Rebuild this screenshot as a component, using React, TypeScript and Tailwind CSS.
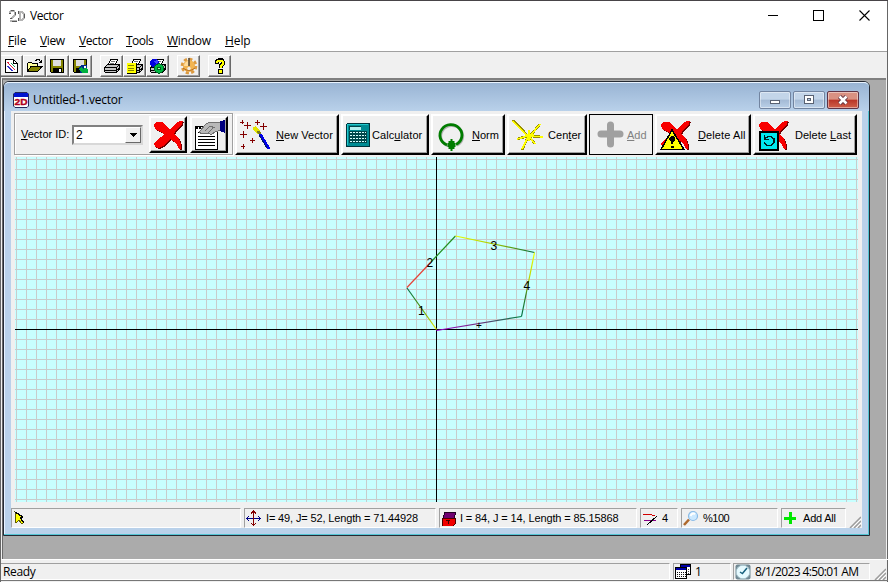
import React from "react";

const ui = "font-['Open_Sans','Noto_Sans',sans-serif] text-[12px] leading-[16px] whitespace-nowrap";
const sans = "font-['Liberation_Sans',Arial,sans-serif] text-[11px] leading-[14px] whitespace-nowrap";

type IconProps = { w: number; h: number; className?: string; smooth?: boolean; children: React.ReactNode };
function Icon({ w, h, className = "", smooth, children }: IconProps) {
  return (
    <svg width={w} height={h} viewBox={`0 0 ${w} ${h}`} className={"block shrink-0 " + className} shapeRendering={smooth ? "auto" : "crispEdges"} fill="none">
      {children}
    </svg>
  );
}

function ToolButton({ children, className = "" }: { children: React.ReactNode; className?: string }) {
  return (
    <button className={"flex h-[22px] w-[23px] shrink-0 items-center justify-center border border-t-white border-l-white border-r-[#696969] border-b-[#696969] bg-[#f0f0f0] shadow-[inset_-1px_-1px_0_#a0a0a0] " + className}>
      {children}
    </button>
  );
}

function Page() {
  return (
    <Icon w={17} h={16}>
      <path d="M2.5 1.500H10.500L14.500 5.500V14.500H2.500Z" fill="#fff" stroke="#000" />
      <path d="M10.500 1.500V5.500H14" stroke="#000" />
      <path d="M4.500 4L6 5.500M6 6L12.500 12.500" stroke="#e02040" />
      <path d="M4.500 8L9.500 13" stroke="#3030d0" />
      <path d="M8 5L12.500 9.500" stroke="#20a060" />
    </Icon>
  );
}
function Folder() {
  return (
    <Icon w={17} h={16}>
      <path d="M1.500 13.500V5.500L2.500 4.500H5.500L6.500 5.500H11.500V8" fill="#ffff9c" stroke="#000" />
      <path d="M1.500 13.500L5 8.500H16L11.500 13.500Z" fill="#848400" stroke="#000" />
      <path d="M9.500 3L11 1.500H13L15 4M15.500 1.500V4.500H12.500" stroke="#000" />
    </Icon>
  );
}
function Floppy({ globe }: { globe?: boolean }) {
  return (
    <Icon w={17} h={16}>
      <path d="M1.500 1.500H14.500V14.500H2.500L1.500 13.500Z" fill="#848400" stroke="#000" />
      <path d="M4 2H12V8H4Z" fill="#dedede" />
      <path d="M4 10H13V15H4Z" fill="#000" />
      <path d="M10 11H12V14H10Z" fill="#fff" />
      {globe && (
        <>
          <path d="M7 9L9 7H15V15H8Z" fill="#002c8c" />
          <path d="M7 11L9 9L11 11L14 9L16 12V15H10L8 13Z" fill="#00b040" />
          <path d="M12 8H14V10H12Z" fill="#fff" />
        </>
      )}
    </Icon>
  );
}
function Printer({ note, globe }: { note?: boolean; globe?: boolean }) {
  return (
    <Icon w={18} h={16}>
      <path d="M5.500 6.500L7.500 1.500H14.500L12.500 6.500Z" fill="#fff" stroke="#000" />
      <path d="M8 3.500H12M7 5.500H11" stroke="#777" />
      <path d="M1.500 9.500L4.500 6.500H16.500V11L13.500 14.500H2.500L1.500 13.500Z" fill="#c6c6c6" stroke="#000" />
      <path d="M2 9.500H13.500L16 7M2 12.500H13.500L16.500 9.500M13.500 10V14" stroke="#000" />
      {note && (
        <>
          <path d="M1 5H10V15H1Z" fill="#ffff00" />
          <path d="M2 7.500H8M2 10.500H8M2 12.500H8" stroke="#848400" />
          <path d="M1 15.500H10.500V5" stroke="#000" />
        </>
      )}
      {globe && (
        <>
          <circle cx="5.500" cy="5" r="4.500" fill="#0000e0" />
          <path d="M5 3L9 2V5L7 6Z" fill="#4040ff" />
          <circle cx="10" cy="10.500" r="4.700" fill="#00b840" stroke="#006020" />
          <circle cx="10" cy="10.500" r="1.500" fill="#b0ffb0" stroke="#006020" />
        </>
      )}
    </Icon>
  );
}
function Gear() {
  return (
    <Icon w={18} h={18} smooth>
      <circle cx="9" cy="9" r="6" fill="#f2b552" />
      <circle cx="9" cy="9" r="7" stroke="#dc9a40" strokeWidth="2.600" strokeDasharray="3.200 2.300" />
      <path d="M4 9A5 5 0 0 1 9 4V9Z" fill="#ffdc9c" />
      <path d="M3 11Q9 16 15 11" stroke="#b46b1e" />
      <circle cx="9" cy="11.500" r="1.700" fill="#f0ece4" />
      <path d="M9 1V9" stroke="#4c4030" strokeWidth="1.500" />
    </Icon>
  );
}
function Help() {
  return (
    <Icon w={16} h={16}>
      <path d="M5 6V3.500L7 2H10L11 4V6L8.500 8V10" stroke="#000" strokeWidth="4" />
      <path d="M5 5V3.500L7 2.500H9L11 4V6L8.500 8V10" stroke="#ffff00" strokeWidth="2" />
      <path d="M6 11H11V16H6Z" fill="#000" />
      <path d="M7 12H10V15H7Z" fill="#ffff00" />
    </Icon>
  );
}

function RedX() {
  return (
    <>
      <path d="M2 5L4 3H10L14 7L18 11Q22 5 28 2H31L30 5L25 10L22 15L27 20L29 25V30H27L24 24L18 20L13 26L7 29L3 28L2 24L6 20L12 16L9 13L3 10Z" fill="#700000" />
      <path d="M1 4L3 2H9L13 6L17 10Q21 4 27 1H30L29 4L24 9L21 14L26 19L28 24V29H26L23 23L17 19L12 25L6 28L2 27L1 23L5 19L11 15L8 12L2 9Z" fill="#f80000" />
    </>
  );
}

function BigButton({ width, icon, children, className = "" }: { width: string; icon: React.ReactNode; children?: React.ReactNode; className?: string }) {
  return (
    <button className={`flex h-[41px] shrink-0 items-center border-2 border-t-white border-l-white border-r-black border-b-black bg-[#f0f0f0] shadow-[inset_-1px_-1px_0_#a0a0a0] ${sans} ${width} ${className}`}>
      {icon}
      {children}
    </button>
  );
}

function Panel({ width, children, className = "" }: { width: string; children?: React.ReactNode; className?: string }) {
  return (
    <div className={`flex h-[20px] shrink-0 items-center border border-t-[#a0a0a0] border-l-[#a0a0a0] border-r-white border-b-white ${width} ${className}`}>
      {children}
    </div>
  );
}

function Grip() {
  return (
    <Icon w={12} h={12} smooth>
      <path d="M1 12L12 1M5 12L12 5M9 12L12 9" stroke="#9c9c9c" strokeWidth="1.500" />
      <path d="M3 12L12 3M7 12L12 7" stroke="#fff" />
    </Icon>
  );
}

function Wand() {
  return (
    <Icon w={32} h={32}>
      <path d="M1 3.500H5M3.500 1V5M5 6.500H12M8.500 3V10M16 3.500H21M18.500 1V6M21 7.500H28M24.500 4V11M1 15.500H8M4.500 12V19M11 21.500H16M13.500 19V24M2 27.500H6M4.500 25V30" stroke="#840000" />
      <path d="M15 8L20 14" stroke="#e4e400" strokeWidth="4" />
      <path d="M19 12L23 18" stroke="#777b20" strokeWidth="3" />
      <path d="M21 15L30 30" stroke="#0000e8" strokeWidth="3" />
      <path d="M20 16L28 29" stroke="#001870" />
    </Icon>
  );
}
function CalculatorIcon() {
  return (
    <Icon w={24} h={24}>
      <path d="M1.500 .500H23.500V23.500H.500V1.500Z" fill="#008c94" stroke="#00343c" />
      <path d="M1.500 22V1.500H22" stroke="#20c8cc" />
      <path d="M4 4H15V7H4Z" fill="#b0f0f0" />
      <path d="M3.500 7V3.500H15" stroke="#00484c" />
      <path d="M3 8H21V20H3Z" fill="#00484c" />
      {[9, 12, 15, 18].map((y) => (
        <path key={y} d={`M4 ${y + 0.5}H20`} stroke="#d8ffff" strokeDasharray="2 1" />
      ))}
    </Icon>
  );
}
function NormIcon() {
  return (
    <Icon w={30} h={34} smooth>
      <path d="M11 28A11 10.500 0 1 1 20 27.500" stroke="#b4b4b4" strokeWidth="2.500" />
      <path d="M10 27A11 10.500 0 1 1 19 26.500" stroke="#007c00" strokeWidth="2.800" />
      <path d="M14.500 21V33M12.500 23V31M16.500 23V31M10.500 26H18.500M10.500 28H18.500" stroke="#007c00" strokeWidth="2" />
    </Icon>
  );
}
function Star() {
  return (
    <Icon w={32} h={32}>
      {["M1 1L16 17", "M18 17L28 5", "M17 17L31 18", "M16 17L5 20", "M16 18L10 31", "M17 17L23 25"].map((d) => (
        <path key={d} d={d} stroke="#9a9000" strokeWidth="2.500" />
      ))}
      {["M1 2L16 18", "M18 17L28 5", "M17 17L31 18", "M16 17L5 20", "M16 18L10 30", "M17 17L23 25", "M17 11V22M13 16H22"].map((d) => (
        <path key={d} d={d} stroke="#ffff00" strokeWidth="1.500" />
      ))}
    </Icon>
  );
}

function VectorGrid() {
  return (
    <svg width="843" height="345" viewBox="15 157 843 345" className="ml-[4px] block shrink-0" fill="none">
      <defs>
        <pattern id="grid" x="16" y="159" width="10" height="10" patternUnits="userSpaceOnUse">
          <path d="M.5 0V10M0 .5H10" stroke="#c8cccc" />
        </pattern>
        <linearGradient id="v1" gradientUnits="userSpaceOnUse" x1="407" y1="288" x2="436" y2="329"><stop stopColor="#007050" /><stop offset=".5" stopColor="#549800" /><stop offset="1" stopColor="#f0f000" /></linearGradient>
        <linearGradient id="v3" gradientUnits="userSpaceOnUse" x1="455" y1="236" x2="534" y2="252"><stop stopColor="#eeff00" /><stop offset=".5" stopColor="#a5c600" /><stop offset="1" stopColor="#006838" /></linearGradient>
        <linearGradient id="v4" gradientUnits="userSpaceOnUse" x1="534" y1="252" x2="521" y2="317"><stop stopColor="#f5ff00" /><stop offset=".5" stopColor="#adca00" /><stop offset=".65" stopColor="#328020" /><stop offset="1" stopColor="#007048" /></linearGradient>
        <linearGradient id="v5" gradientUnits="userSpaceOnUse" x1="436" y1="330" x2="521" y2="317"><stop stopColor="#a000d0" /><stop offset=".5" stopColor="#703080" /><stop offset="1" stopColor="#008040" /></linearGradient>
      </defs>
      <path d="M15 157H858V502H15Z" fill="#c8ffff" />
      <path d="M15 157H858V502H15Z" fill="url(#grid)" />
      <path d="M436.500 157V502M15 329.500H858" stroke="#000" shapeRendering="crispEdges" />
      <g strokeWidth="1.200">
        <path d="M407 288L436.500 329.500" stroke="url(#v1)" />
        <path d="M407 287.500L431 262" stroke="#e64238" />
        <path d="M431 262L455.500 236" stroke="#239020" />
        <path d="M455.500 236L534.500 252.500" stroke="url(#v3)" />
        <path d="M534.500 252.500L521.500 316.500" stroke="url(#v4)" />
        <path d="M521.500 316.500L436.500 330.500" stroke="url(#v5)" />
      </g>
      <g fill="#000" fontFamily="Liberation Sans, Arial, sans-serif" fontSize="12">
        <text x="418" y="315">1</text>
        <text x="426.500" y="267">2</text>
        <text x="490.500" y="250">3</text>
        <text x="523.500" y="290">4</text>
        <text x="476" y="329" fontSize="10">+</text>
      </g>
    </svg>
  );
}

function CaptionButton({ close, children }: { close?: boolean; children: React.ReactNode }) {
  return (
    <button className={`flex h-[18px] w-[32px] items-center justify-center rounded-[2px] border shadow-[inset_0_0_0_1px_#ffffff70] ${close ? "border-[#5f3345] bg-linear-to-b from-[#d99182] from-45% via-[#b93427] via-50% to-[#d0604b]" : "border-[#7284a0] bg-linear-to-b from-[#c3d5e9] from-45% via-[#a4bad5] via-50% to-[#bad0e8]"}`}>
      {children}
    </button>
  );
}

export default function App() {
  return (
    <div className="flex h-[582px] w-[888px] flex-col overflow-hidden border-t border-l border-t-[#484448] border-l-[#666] bg-[#f0f0f0] text-black shadow-[inset_-1px_0_0_#666]">
      <header className="mr-px flex h-[29px] shrink-0 items-center bg-white">
        <Icon w={18} h={14} className="ml-[6px]">
          <path d="M2 4L4 2H7L8 4V6L4 10M3 11.500H10M12.500 2V12M12 2.500H14L17 5V9L14 11.500" stroke="#b4b4b4" strokeWidth="2" />
          <path d="M2 4.500H4M4 1.500H7M8.500 3V6M3 9.500H5M5 12.500H10M11.500 2V5M11.500 9V12M17.500 5V9" stroke="#585858" />
        </Icon>
        <span className={`ml-[5px] ${ui} tracking-[-.45px]`}>Vector</span>
        <div className="mr-[17px] ml-auto flex items-center gap-[35px]">
          <Icon w={11} h={11}><path d="M1 5.500H11" stroke="#000" /></Icon>
          <Icon w={11} h={11}><path d="M.5 .5H10.500V10.500H.5Z" stroke="#000" /></Icon>
          <Icon w={11} h={11} smooth><path d="M.5 .5L10.500 10.500M10.500 .5L.5 10.500" stroke="#000" strokeWidth="1.100" /></Icon>
        </div>
      </header>

      <nav className={`mr-px flex h-[22px] shrink-0 items-center border-b border-b-[#a0a0a0] bg-white pt-px ${ui}`}>
        <span className="ml-[7px] w-[32px] tracking-[-.2px]"><u>F</u>ile</span>
        <span className="w-[39px] tracking-[-.4px]"><u>V</u>iew</span>
        <span className="w-[47px] tracking-[-.4px]"><u>V</u>ector</span>
        <span className="w-[41px] tracking-[-.55px]"><u>T</u>ools</span>
        <span className="w-[58px] tracking-[-.25px]"><u>W</u>indow</span>
        <span className="tracking-[-.1px]"><u>H</u>elp</span>
      </nav>

      <div className="-ml-px flex h-[26px] shrink-0 items-start pt-[3px]">
        <ToolButton><Page /></ToolButton>
        <ToolButton><Folder /></ToolButton>
        <ToolButton><Floppy /></ToolButton>
        <ToolButton><Floppy globe /></ToolButton>
        <ToolButton className="ml-[8px]"><Printer /></ToolButton>
        <ToolButton><Printer note /></ToolButton>
        <ToolButton><Printer globe /></ToolButton>
        <ToolButton className="ml-[8px]"><Gear /></ToolButton>
        <ToolButton className="ml-[8px]"><Help /></ToolButton>
      </div>

      <main className="mr-[2px] ml-px h-[481px] shrink-0 border-t-2 border-l border-t-[#808080] border-l-[#696969] bg-[#ababab] pt-px">
        <section className="flex h-[455px] w-[867px] flex-col rounded-t-[6px] border border-[#252a34] bg-[#b9d1ea] shadow-[inset_-1px_-1px_0_#54c4d3,inset_1px_1px_0_#e8f3ff]">
          <div className="flex h-[29px] shrink-0 items-center rounded-t-[5px] border-t border-t-[#e8f3ff] bg-linear-to-b from-[#99b4d4] to-[#b9d1ea] pt-[5px] pr-[10px] pl-[9px]">
            <Icon w={16} h={16} smooth>
              <path d="M2 .5H14L15.500 2V14L14 15.500H2L.5 14V2Z" fill="#fff" stroke="#24285c" />
              <path d="M1 1H15V5H1Z" fill="#0014d0" />
              <text x="1.500" y="13" textLength="13" lengthAdjust="spacingAndGlyphs" fill="#b00020" stroke="#b00020" strokeWidth=".4" fontFamily="Liberation Sans, Arial, sans-serif" fontSize="9.500" fontWeight="700">2D</text>
            </Icon>
            <span className={`ml-[4px] ${ui} tracking-[-.24px]`}>Untitled-1.vector</span>
            <div className="ml-auto flex gap-[2px]">
              <CaptionButton><Icon w={12} h={8}><path d="M1.500 4.500H10.500V7.500H1.500Z" fill="#fff" stroke="#596273" /></Icon></CaptionButton>
              <CaptionButton><Icon w={12} h={10}><path d="M1.500 .5H10.500V8.500H1.500Z" fill="#fff" stroke="#596273" /><path d="M4.500 3.500H7.500V5.500H4.500Z" fill="#b9cee6" stroke="#596273" /></Icon></CaptionButton>
              <CaptionButton close><Icon w={12} h={10} smooth><path d="M2.500 1.500L9.500 8.500M9.500 1.500L2.500 8.500" stroke="#603340" strokeWidth="4.400" /><path d="M2.500 1.500L9.500 8.500M9.500 1.500L2.500 8.500" stroke="#fff" strokeWidth="2.600" /></Icon></CaptionButton>
            </div>
          </div>

          <div className="ml-[7px] flex h-[417px] w-[851px] flex-col bg-[#f0f0f0]">
            <div className="flex h-[46px] shrink-0 items-end gap-[2px] pb-[2px]">
              <div className="ml-[3px] flex h-[42px] w-[219px] items-center border border-[#a0a0a0] shadow-[inset_1px_1px_0_#fff,1px_1px_0_#fff]">
                <span className={`ml-[6px] w-[51px] ${sans}`}><u>V</u>ector ID:</span>
                <div className="mt-px flex h-[20px] w-[71px] items-center border-2 border-t-[#808080] border-l-[#808080] border-r-[#d8d8d8] border-b-[#d8d8d8] bg-white">
                  <span className={`ml-[2px] ${sans} text-[12px]!`}>2</span>
                  <div className="ml-auto flex h-[16px] w-[16px] items-center justify-center border border-t-white border-l-white border-r-[#696969] border-b-[#696969] bg-[#f0f0f0]">
                    <Icon w={7} h={4}><path d="M0 0H7L3.500 4Z" fill="#000" /></Icon>
                  </div>
                </div>
                <BigButton width="w-[38px]" className="ml-[6px] h-[37px]! pl-[2px]" icon={<Icon w={32} h={32} className="mt-[3px]"><RedX /></Icon>} />
                <BigButton width="w-[38px]" className="ml-[3px] h-[37px]! pl-[2px]" icon={
                  <Icon w={32} h={32} className="mt-[2px]">
                    <path d="M1.500 7.500H23.500V30.500H1.500Z" fill="#fff" stroke="#000" />
                    <path d="M2 8.500H23" stroke="#000" strokeWidth="3" strokeDasharray="2 1" />
                    <path d="M4 13.500H19M4 17.500H21M4 20.500H21M4 23.500H21M4 26.500H21" stroke="#000" />
                    <path d="M5 13L12 5L16 3H26L27 11L21 13L17 16L15 14L11 14L8 15Z" fill="#b8b8b8" stroke="#707070" />
                    <path d="M11 12L16 7L21 9M14 14L19 9" stroke="#707070" />
                    <path d="M26 2L31 1V14L26 12Z" fill="#000080" />
                  </Icon>
                } />
              </div>

              <BigButton width="w-[104px]" className="pl-[2px]" icon={<Wand />}><span className="ml-[5px] tracking-[.06px]"><u>N</u>ew Vector</span></BigButton>
              <BigButton width="w-[88px]" className="pl-[3px]" icon={<CalculatorIcon />}><span className="ml-[2px] tracking-[.08px]">Calc<u>u</u>lator</span></BigButton>
              <BigButton width="w-[74px]" className="pl-[4px]" icon={<NormIcon />}><span className="ml-[5px]"><u>N</u>orm</span></BigButton>
              <BigButton width="w-[80px]" className="pl-[3px]" icon={<Star />}><span className="ml-[4px] tracking-[.05px]">Cen<u>t</u>er</span></BigButton>
              <button className={`flex h-[41px] w-[64px] shrink-0 items-center border border-black pl-[6px] text-[#808080] ${sans}`}>
                <Icon w={28} h={28} smooth>
                  <path d="M14.500 4V23M5 13H24" stroke="#a0a0a0" strokeWidth="7" strokeLinecap="round" />
                </Icon>
                <span className="ml-[3px]"><u>A</u>dd</span>
              </button>
              <BigButton width="w-[96px]" className="pl-[3px]" icon={
                <Icon w={32} h={32} className="mt-[3px]">
                  <RedX />
                  <path d="M12 10L24 29.500H1Z" fill="#ffff00" stroke="#000" strokeWidth="1.500" />
                  <path d="M9 18L11 16H13L15 18V20L13 22V24H11V22L9 20ZM11 26H14V28H11Z" fill="#000" />
                </Icon>
              }><span className="ml-[6px] tracking-[.1px]"><u>D</u>elete All</span></BigButton>
              <BigButton width="w-[104px]" className="pl-[3px]" icon={
                <Icon w={32} h={32} className="mt-[3px]">
                  <RedX />
                  <path d="M2 12H20V30H2Z" fill="#00e8ef" stroke="#000" strokeWidth="2" />
                  <path d="M6.500 15V19.500H11M6.500 19L10 16.500H13L16 19V22L13 25.500H9L6 23" stroke="#001c20" strokeWidth="1.500" />
                </Icon>
              }><span className="ml-[5px] tracking-[.03px]">Delete <u>L</u>ast</span></BigButton>
            </div>

            <VectorGrid />

            <div className={`mt-auto flex h-[20px] shrink-0 items-center gap-[3px] ${sans}`}>
              <Panel width="w-[230px]">
                <Icon w={11} h={14} className="ml-[2px]">
                  <path d="M1 1L9 6L6 7L10 11L8 13L5 9L2 12Z" fill="#ffff00" stroke="#605c00" />
                  <path d="M1 1L9 6L6.500 7L10 12" stroke="#000" strokeWidth="1.200" />
                </Icon>
              </Panel>
              <Panel width="w-[192px]">
                <Icon w={17} h={16}>
                  <path d="M1 8.500H16M4 6L1.500 8.500L4 11M13 6L15.500 8.500L13 11" stroke="#000084" />
                  <path d="M8.500 1V16M6 3.500L8.500 1L11 3.500M6 13L8.500 15.500L11 13" stroke="#840000" />
                </Icon>
                <span className="ml-[4px] tracking-[-.14px]">I= 49, J= 52, Length = 71.44928</span>
              </Panel>
              <Panel width="w-[198px]">
                <Icon w={15} h={15} className="ml-px">
                  <path d="M4 1H15L13 7H2Z" fill="#700070" stroke="#240024" />
                  <path d="M1 7H14V13L12 15H1Z" fill="#f00000" stroke="#500000" />
                  <path d="M5 9.500H9M7.500 9V13" stroke="#400000" />
                </Icon>
                <span className="ml-[4px] tracking-[-.12px]">I = 84, J = 14, Length = 85.15868</span>
              </Panel>
              <Panel width="w-[38px]">
                <Icon w={15} h={15} className="ml-[2px]">
                  <path d="M0 3H6L12 5" stroke="#d00000" />
                  <path d="M1 10L8 9H13" stroke="#880088" />
                  <path d="M4 14L14 5" stroke="#000" />
                </Icon>
                <span className="ml-[4px]">4</span>
              </Panel>
              <Panel width="w-[97px]">
                <Icon w={16} h={16} smooth className="ml-px">
                  <path d="M1 15L6 9.500" stroke="#ae682c" strokeWidth="2.600" />
                  <circle cx="10" cy="6" r="4.500" fill="#cce9ff" stroke="#8bbbe6" strokeWidth="1.200" />
                  <path d="M7.500 6Q9 2.500 12 4" stroke="#fff" strokeWidth="2" />
                </Icon>
                <span className="ml-[4px] tracking-[-.5px]">%100</span>
              </Panel>
              <Panel width="w-[65px]">
                <Icon w={14} h={14} className="ml-px"><path d="M7 1V13M1 7H13" stroke="#00e800" strokeWidth="3" /></Icon>
                <span className="ml-[6px] tracking-[-.2px]">Add All</span>
              </Panel>
              <div className="mt-[7px]"><Grip /></div>
            </div>
          </div>
        </section>
      </main>

      <footer className={`-ml-px flex h-[22px] shrink-0 items-start border-t border-t-white border-b border-b-[#777] pt-[3px] ${ui}`}>
        <Panel width="w-[670px]" className="h-[17px]!"><span className="ml-[2px] tracking-[-.35px]">Ready</span></Panel>
        <Panel width="w-[58px]" className="ml-[3px] h-[17px]!">
          <Icon w={16} h={15} className="ml-px">
            <path d="M5.500 .5H15.500V10.500H5.500Z" fill="#fff" stroke="#000" />
            <path d="M6 2H15" stroke="#0000a8" strokeWidth="2" />
            <path d="M7 5.500H15M7 7.500H15M7 9.500H15" stroke="#444" strokeDasharray="1 1" />
            <path d="M.5 3.500H11.500V14.500H.5Z" fill="#fff" stroke="#000" />
            <path d="M1 5H11" stroke="#0000a8" strokeWidth="2" />
            <path d="M2 8.500H11M2 10.500H11M2 12.500H11" stroke="#111" strokeDasharray="1 1" />
          </Icon>
          <span className="ml-[4px]">1</span>
        </Panel>
        <Panel width="w-[137px]" className="ml-[2px] h-[17px]!">
          <Icon w={16} h={16} smooth className="ml-px">
            <rect x=".5" y=".5" width="15" height="15" rx="2" fill="#718994" />
            <circle cx="8" cy="8" r="6.800" fill="#e6faff" stroke="#a9c4cd" />
            <path d="M7 10L12 4M8 10L5 8" stroke="#165f7c" strokeWidth="1.500" />
          </Icon>
          <span className="ml-[4px] tracking-[-.62px]">8/1/2023 4:50:01 AM</span>
        </Panel>
        <div className="mt-[5px] ml-[4px]"><Grip /></div>
      </footer>
    </div>
  );
}
